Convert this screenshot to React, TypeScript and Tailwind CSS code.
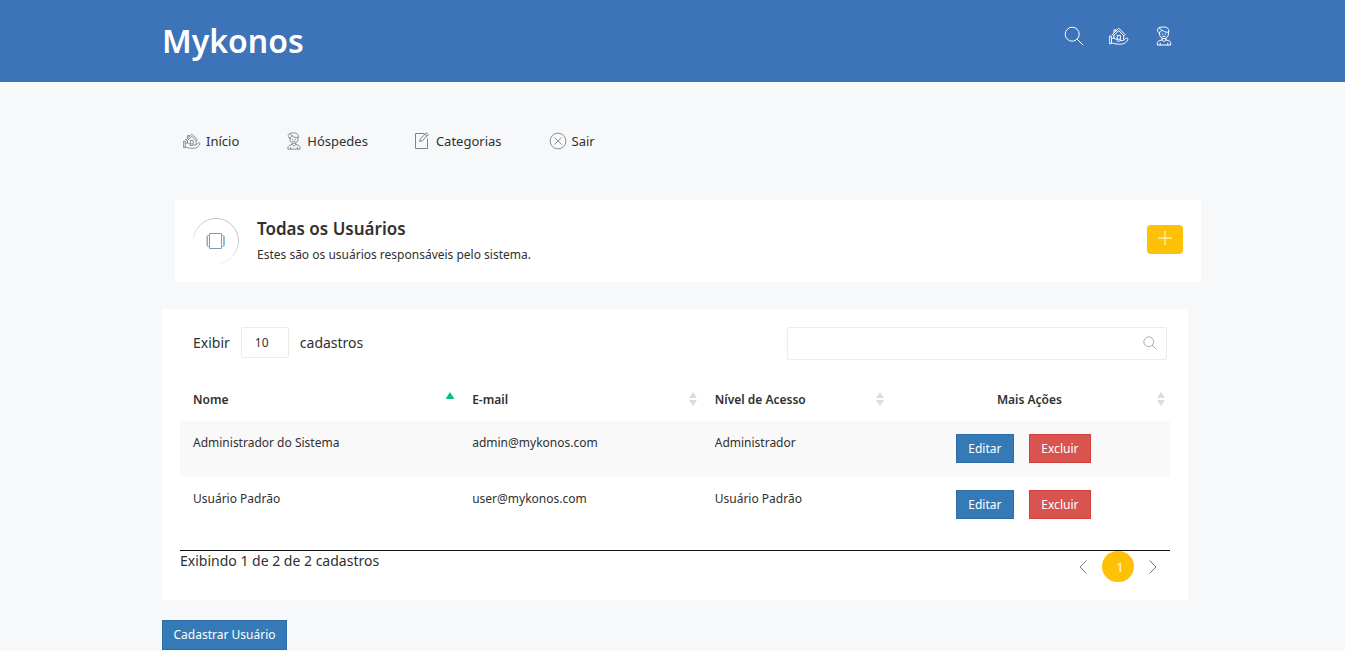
import React from "react";

type IconProps = { className?: string };

const SearchIcon = ({ className }: IconProps) => (
  <svg viewBox="0 0 20 20" fill="none" stroke="currentColor" className={className}>
    <circle cx="8.2" cy="8.2" r="7" />
    <path d="M13.2 13.2 19 19" strokeLinecap="round" />
  </svg>
);

const HouseIcon = ({ className }: IconProps) => (
  <svg viewBox="0 0 20 18" fill="none" stroke="currentColor" strokeWidth="1" strokeLinejoin="round" strokeLinecap="round" className={className}>
    <path d="M3.400 7.600 9.700 1.200l6.400 6.400-1.200 1.200-5.200-5.200-5.100 5.200-1.200-1.200Z" />
    <path d="M5 5.800V2.800h1.900v1.200" />
    <path d="M4.900 8.800v2.400M14.700 8.800v3.400" />
    <path d="M8.200 12.200V8.400h3.200v3.800" />
    <path d="M.7 9.200h1.700v7.400H.7z" />
    <path d="M2.400 11.600c1.800-.8 3.400-.4 4.600.7h3.800c1.200 0 1.200 1.700 0 1.700H8M12 13.600c1.800.2 3.500-.6 4.600-2 .9-1.100 2.700-.5 2.300.8-.9 2.600-3.700 4.700-7 4.800-3.500.1-6.300-.2-9.500-1.500" />
  </svg>
);

const GuestIcon = ({ className }: IconProps) => (
  <svg viewBox="0 0 16 20" fill="none" stroke="currentColor" strokeWidth="1" strokeLinejoin="round" strokeLinecap="round" className={className}>
    <path d="M3.500 6.200v1.600c0 2.700 2 4.800 4.500 4.800s4.500-2.100 4.500-4.800V5.500" />
    <path d="M3.500 7C.7 6.300.8 1.400 4.200 1.400 6.500.7 10.200.7 11.800 2.300c1.300 1.300 1.200 2.600.7 4C9.600 6.400 8 5.600 6.400 4.400 5.300 4.800 4.300 5.600 3.500 7Z" />
    <path d="M4.200 1.400c-1 .8-.8 2.400 2.200 3M6.300 8h.5M9.300 8h.5M6.800 10.300h2.400" />
    <path d="M6.200 12.400v1.500l-3 .8c-1.300.4-1.900 1.400-1.900 2.600V19h13.400v-1.700c0-1.200-.6-2.200-1.900-2.600l-3-.8v-1.500M6.200 13.900 8 15.800l1.800-1.900M4.200 17.200V19M11.800 17.200V19" />
  </svg>
);

const EditIcon = ({ className }: IconProps) => (
  <svg viewBox="0 0 16 18" fill="none" stroke="currentColor" strokeLinejoin="round" className={className}>
    <path d="M9.500 1.500h-9v15h12v-10" />
    <path d="m4.600 9.500.7-2.600 6.200-6.100 1.900 1.900-6.200 6.100-2.600.7ZM10.200 2.100l1.900 1.900" />
  </svg>
);

const ExitIcon = ({ className }: IconProps) => (
  <svg viewBox="0 0 18 18" fill="none" stroke="currentColor" strokeWidth="0.9" className={className}>
    <circle cx="9" cy="9" r="7.900" />
    <path d="m5.500 5.500 7 7M12.500 5.500l-7 7" />
  </svg>
);

const PanelIcon = () => (
  <svg viewBox="0 0 46 46" fill="none" className="h-[46px] w-[46px] shrink-0">
    <defs>
      <linearGradient id="fadeLeft" x1="0" y1="22" x2="0" y2="0" gradientUnits="userSpaceOnUse">
        <stop offset="0" stopColor="#c4c4c4" stopOpacity="0.3" />
        <stop offset="1" stopColor="#c4c4c4" />
      </linearGradient>
      <linearGradient id="fadeRight" x1="0" y1="46" x2="0" y2="23" gradientUnits="userSpaceOnUse">
        <stop offset="0" stopColor="#c4c4c4" stopOpacity="0.2" />
        <stop offset="1" stopColor="#c4c4c4" />
      </linearGradient>
    </defs>
    <path d="M.5 21A22.500 22.500 0 0 1 23 .5" stroke="url(#fadeLeft)" />
    <path d="M23 .5A22.500 22.500 0 0 1 45.500 23" stroke="#c4c4c4" />
    <path d="M45.500 23A22.500 22.500 0 0 1 25 45.500" stroke="url(#fadeRight)" />
    <path d="M16.500 15.500h12v15h-12z" stroke="#8f94b8" />
    <path d="M16.500 17.500h-2v11h2" stroke="#8fb0c8" />
    <path d="M14.500 18.500h-1v9h1" stroke="#e0c0c8" />
    <path d="M28.500 17.500h2v11h-2M30.500 18.500h1v9h-1" stroke="#8fbcd6" />
  </svg>
);

const SortIcon = ({ active }: { active?: boolean }) => (
  <svg viewBox="0 0 8 14" className="mb-px h-3.5 w-2 shrink-0">
    {active ? (
      <path d="M4 0 8.500 7h-9z" fill="#06bf8f" />
    ) : (
      <path d="M4 0 8 6H0zM4 14l4-6H0z" fill="#dcdcdc" />
    )}
  </svg>
);

const menu = [
  { label: "Início", icon: <HouseIcon className="h-4 w-[18px]" /> },
  { label: "Hóspedes", icon: <GuestIcon className="h-[18px] w-4" /> },
  { label: "Categorias", icon: <EditIcon className="h-[18px] w-4" /> },
  { label: "Sair", icon: <ExitIcon className="h-[18px] w-[18px]" /> },
];

const columns = [
  { label: "Nome", width: "w-[28.2%]" },
  { label: "E-mail", width: "w-[24.5%]" },
  { label: "Nível de Acesso", width: "w-[18.9%]" },
  { label: "Mais Ações", width: "w-[28.4%]" },
];

const users = [
  { name: "Administrador do Sistema", email: "admin@mykonos.com", role: "Administrador" },
  { name: "Usuário Padrão", email: "user@mykonos.com", role: "Usuário Padrão" },
];

const container = "mx-auto max-w-[1031px] pl-[5px]";

const App: React.FC = () => {
  return (
    <div className="min-h-screen bg-[#f6f8fa] font-['Noto_Sans',sans-serif] text-[13px] leading-5 text-[#303030]">
      <header className="bg-[#3d73b9] text-white">
        <div className={`${container} flex h-[82px] items-center justify-between`}>
          <a href="#" className="text-[32px] font-semibold leading-10">
            Mykonos
          </a>
          <div className="mb-2.5 mr-3.5 flex gap-[25px]">
            <button aria-label="Buscar" className="flex w-5 justify-center">
              <SearchIcon className="h-5 w-5" />
            </button>
            <button aria-label="Início" className="flex w-5 items-center justify-center">
              <HouseIcon className="h-[18px] w-5" />
            </button>
            <button aria-label="Hóspedes" className="flex w-5 justify-center">
              <GuestIcon className="h-5 w-4" />
            </button>
          </div>
        </div>
      </header>

      <main className={`${container} pt-[49px]`}>
        <nav className="flex gap-[47px] pl-[21px] text-[13px] leading-5">
          {menu.map((item) => (
            <a key={item.label} href="#" className="flex items-center gap-[5px]">
              <span className="text-[#7d828c]">{item.icon}</span>
              {item.label}
            </a>
          ))}
        </nav>

        <section className="-mr-[13px] ml-[13px] mt-[49px] flex h-[82px] items-center gap-[18px] bg-white px-[18px]">
          <PanelIcon />
          <div className="grow">
            <h2 className="text-[17px] font-semibold leading-6">Todas os Usuários</h2>
            <p className="mt-1 text-xs leading-5">Estes são os usuários responsáveis pelo sistema.</p>
          </div>
          <button aria-label="Adicionar" className="mb-1 flex h-[29px] w-9 items-center justify-center rounded-sm bg-[#ffc107] text-white">
            <svg viewBox="0 0 14 14" fill="none" stroke="currentColor" className="mb-0.5 h-3.5 w-3.5">
              <path d="M7 0v14M0 7h14" />
            </svg>
          </button>
        </section>

        <section className="mt-[27px] bg-white p-[18px]">
          <div className="flex items-start justify-between pl-[13px] pr-[3px]">
            <label className="flex items-center gap-[11px] text-sm">
              Exibir
              <select className="h-[31px] w-12 appearance-none rounded-xs border border-[#ececec] bg-white pl-[13px] text-xs">
                <option>10</option>
                <option>25</option>
                <option>50</option>
              </select>
              cadastros
            </label>
            <label className="flex h-[33px] w-[380px] items-center rounded-xs border border-[#ececec] pr-[9px]">
              <input type="search" aria-label="Pesquisar" className="h-full grow px-3 outline-none" />
              <SearchIcon className="mb-0.5 h-3.5 w-3.5 text-[#858b92]" />
            </label>
          </div>

          <table className="mt-[18px] w-full table-fixed">
            <thead>
              <tr className="h-[43px]">
                {columns.map((column, i) => (
                  <th key={column.label} className={`${column.width} pl-[13px] pr-[5px] text-xs font-semibold`}>
                    <div className="flex items-center">
                      <span className={i === 3 ? "grow text-center" : "grow text-left"}>{column.label}</span>
                      <SortIcon active={i === 0} />
                    </div>
                  </th>
                ))}
              </tr>
            </thead>
            <tbody className="text-xs leading-5">
              {users.map((user) => (
                <tr key={user.email} className="h-14 align-top odd:bg-[#f9f9f9]">
                  <td className="px-[13px] pt-3">{user.name}</td>
                  <td className="px-[13px] pt-3">{user.email}</td>
                  <td className="px-[13px] pt-3">{user.role}</td>
                  <td className="pt-[13px]">
                    <div className="flex justify-center gap-[15px] pr-3">
                      <button className="h-[29px] w-[58px] border border-[#2e6da4] bg-[#337ab7] text-white">
                        Editar
                      </button>
                      <button className="h-[29px] w-[62px] border border-[#d43f3a] bg-[#d9534f] text-white">
                        Excluir
                      </button>
                    </div>
                  </td>
                </tr>
              ))}
            </tbody>
          </table>

          <div className="mt-[17px] flex justify-between border-t border-[#111111]">
            <p className="text-sm leading-5">Exibindo 1 de 2 de 2 cadastros</p>
            <div className="mr-[13px] flex items-center gap-[15px] text-[#777777]">
              <button aria-label="Anterior">
                <svg viewBox="0 0 8 14" fill="none" stroke="currentColor" className="h-3.5 w-2">
                  <path d="M7.500.5 1 7l6.500 6.500" />
                </svg>
              </button>
              <button className="h-[31px] w-8 rounded-full bg-[#ffc107] pl-1 text-[13px] text-white">1</button>
              <button aria-label="Próximo">
                <svg viewBox="0 0 8 14" fill="none" stroke="currentColor" className="h-3.5 w-2">
                  <path d="M.5.5 7 7 .5 13.500" />
                </svg>
              </button>
            </div>
          </div>
        </section>

        <button className="mt-5 h-[30px] w-[125px] border border-[#2e6da4] bg-[#337ab7] text-xs text-white">
          Cadastrar Usuário
        </button>
      </main>
    </div>
  );
};

export default App;
